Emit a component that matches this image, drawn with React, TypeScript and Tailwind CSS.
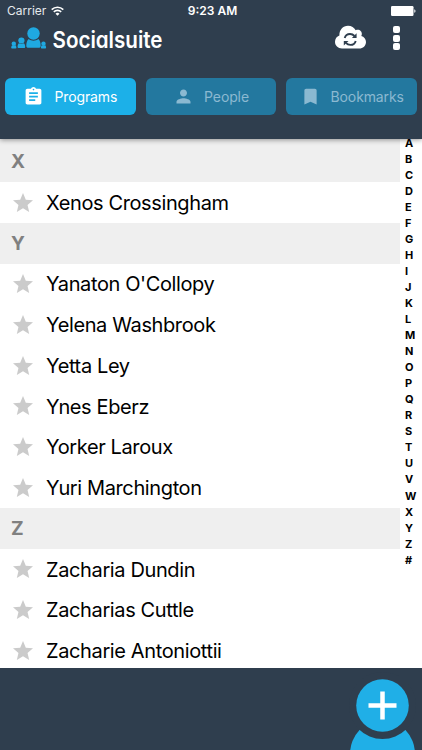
import { useState } from "react";
import { MdAssignment, MdBookmark, MdPerson, MdStar } from "react-icons/md";

const tabs = [
  { label: "Programs", icon: MdAssignment },
  { label: "People", icon: MdPerson },
  { label: "Bookmarks", icon: MdBookmark },
];

const sections = [
  { letter: "X", people: ["Xenos Crossingham"] },
  {
    letter: "Y",
    people: [
      "Yanaton O'Collopy",
      "Yelena Washbrook",
      "Yetta Ley",
      "Ynes Eberz",
      "Yorker Laroux",
      "Yuri Marchington",
    ],
  },
  {
    letter: "Z",
    people: ["Zacharia Dundin", "Zacharias Cuttle", "Zacharie Antoniottii"],
  },
];

const letters = "ABCDEFGHIJKLMNOPQRSTUVWXYZ#".split("");

function StatusBar() {
  return (
    <div className="grid h-[22px] grid-cols-3 items-center pl-[7px] pr-[6px] text-[12px] leading-none text-white">
      <div className="flex items-center gap-[5px]">
        <span className="text-[#e6eaed]">Carrier</span>
        <svg width="13" height="10" viewBox="0 0 13 10" fill="none" stroke="#fff" strokeWidth="1.6">
          <path d="M0.7 3.6a8.3 8.3 0 0 1 11.6 0" />
          <path d="M2.8 5.9a5.3 5.3 0 0 1 7.4 0" />
          <path d="M6.5 9.8 4.5 7.7a2.9 2.9 0 0 1 4 0z" fill="#fff" stroke="none" />
        </svg>
      </div>
      <span className="pl-[2px] text-center font-semibold">9:23 AM</span>
      <svg className="justify-self-end" width="25" height="10" viewBox="0 0 25 10" fill="#fff">
        <rect width="22.5" height="10" rx="1.2" />
        <path d="M23.3 3.2c1.6.4 1.6 3.2 0 3.6z" />
      </svg>
    </div>
  );
}

function Logo() {
  return (
    <svg className="mt-[2px] overflow-visible" width="154" height="30" viewBox="0 0 154 30">
      <g fill="#1fa9e1" transform="translate(0 1.5)">
        <circle cx="22.5" cy="7" r="6.2" />
        <path d="M17.6 12.6c2.8 2.100 7 2.100 9.800 0 1.600 1.600 2.300 4 2.300 6.600 0 1.400-.8 2-2 2H17.300c-1.200 0-2-.6-2-2 0-2.600.7-5 2.300-6.600z" />
        <circle cx="10.4" cy="14" r="3.1" />
        <path d="M7.900 16.700c1.500 1 3.500 1 5 0 1 1 1.300 2.200 1.300 3.600 0 .8-.4 1.200-1.100 1.200H7.700c-.7 0-1.100-.4-1.100-1.200 0-1.400.3-2.600 1.300-3.600z" />
        <circle cx="2.8" cy="17.2" r="2.2" />
        <path d="M1.100 18.800c1 .7 2.400.7 3.400 0 .7.700.9 1.500.9 2.500 0 .5-.3.800-.8.800H1c-.5 0-.8-.3-.8-.8 0-1 .2-1.800.9-2.500z" />
        <circle cx="32.5" cy="17.2" r="2.2" />
        <path d="M30.800 18.800c1 .7 2.400.7 3.400 0 .7.700.9 1.500.9 2.500 0 .5-.3.800-.8.800h-3.600c-.5 0-.8-.3-.8-.8 0-1 .2-1.800.9-2.500z" />
      </g>
      <text
        x="41.5"
        y="22.5"
        fill="#fff"
        textLength="110"
        lengthAdjust="spacingAndGlyphs"
        className="font-['Inter',sans-serif] text-[22.5px] font-semibold [font-feature-settings:'cv11']"
      >
        Socialsuite
      </text>
    </svg>
  );
}

function Header() {
  const [active, setActive] = useState("Programs");

  return (
    <header className="relative z-10 h-[138.5px] shrink-0 bg-[#2f3e4e] shadow-[0_1px_5px_rgba(0,0,0,0.4)]">
      <StatusBar />

      {/* Title bar */}
      <div className="flex h-[33px] items-center justify-between pl-[11px] pr-[22.5px]">
        <Logo />
        <div className="flex items-center gap-[26.5px]">
          <svg className="-mt-[3px]" width="31" height="24" viewBox="0 0 31 24">
            <path
              fill="#fff"
              d="M7 23.500C3 23.500 0 20.600 0 16.800c0-3 1.800-5.400 4.400-6.300C4.200 4.800 8 .7 13 .7c3.500 0 6.300 1.700 7.700 4.600 3-1.600 6.700.8 6.100 4.300-.1.500-.3.900-.5 1.300 2.700.7 4.700 3.100 4.700 6 0 3.700-3 6.600-6.800 6.600z"
            />
            <g fill="none" stroke="#2f3e4e" strokeWidth="1.9">
              <path d="M9.700 13c.7-2.600 2.800-4 5.300-4 1.900 0 3.300.7 4.500 2" />
              <path d="M20.700 15.900c-.7 2.600-2.800 4-5.300 4-1.900 0-3.300-.7-4.500-2" />
            </g>
            <path fill="#2f3e4e" d="M21.600 8.300v4.700h-4.700zM8.800 20.600v-4.700h4.700z" />
          </svg>
          <div className="-mt-[1px] flex flex-col gap-[1.7px]">
            <span className="size-[7px] rounded-[2px] bg-white" />
            <span className="size-[7px] rounded-[2px] bg-white" />
            <span className="size-[7px] rounded-[2px] bg-white" />
          </div>
        </div>
      </div>

      {/* Tabs */}
      <div className="mt-[22.5px] flex gap-[10px] px-[5px]">
        {tabs.map(({ label, icon: Icon }) => (
          <button
            key={label}
            onClick={() => setActive(label)}
            className={`flex h-[37px] flex-1 items-center justify-center gap-[10px] rounded-[6px] text-[14px] tracking-[-0.12px] ${
              active === label ? "bg-[#1cb0e8] text-white" : "bg-[#23789f] text-[#8bb9d1]"
            }`}
          >
            <Icon className="size-[21px]" />
            {label}
          </button>
        ))}
      </div>
    </header>
  );
}

export default function App() {
  return (
    <div className="flex h-[750px] w-[422px] flex-col overflow-hidden bg-white font-['Inter',sans-serif]">
      <Header />

      <main className="flex min-h-0 flex-1">
        <div className="w-[400px] overflow-hidden">
          {sections.map((section) => (
            <section key={section.letter} className="first:bg-[#efefef] first:pt-[3px]">
              <h2 className="flex h-[40.75px] items-center bg-[#efefef] pl-[11px] pt-[1px] text-[19px] font-bold text-[#808080]">
                {section.letter}
              </h2>
              {section.people.map((name) => (
                <div key={name} className="flex h-[40.75px] items-center gap-[11px] bg-white pl-[11px]">
                  <MdStar className="size-6 text-[#cbcbcb]" />
                  <span className="pt-[0.5px] text-[20px] tracking-[-0.38px] text-black">{name}</span>
                </div>
              ))}
            </section>
          ))}
        </div>

        {/* Letter index */}
        <ul className="-mt-[4px] flex flex-1 flex-col pl-[5px] text-[11px] font-bold leading-[16.05px] text-black">
          {letters.map((letter) => (
            <li key={letter}>{letter}</li>
          ))}
        </ul>
      </main>

      <footer className="flex h-[82px] shrink-0 justify-end bg-[#2f3e4e]">
        <button aria-label="Add person">
          <svg width="76" height="82" viewBox="0 0 76 82">
            <ellipse cx="36.5" cy="86" rx="32.5" ry="34" fill="#20afe7" />
            <circle cx="36.5" cy="37.5" r="33.5" fill="#2f3e4e" />
            <circle cx="36.5" cy="37.5" r="26.3" fill="#20afe7" />
            <path d="M36.5 23.500v28M22.500 37.500h28" stroke="#fff" strokeWidth="4.5" />
          </svg>
        </button>
      </footer>
    </div>
  );
}
